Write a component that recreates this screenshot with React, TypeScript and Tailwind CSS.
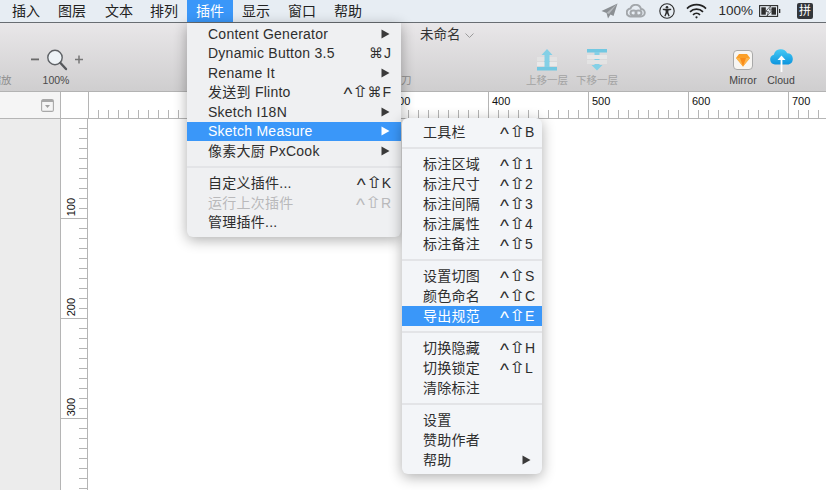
import React from 'react';

const FONT = "font-['Liberation_Sans','Noto_Sans_CJK_SC',sans-serif]";

const menuBar = [
  { label: '插入', ml: 'ml-[12px]' },
  { label: '图层', ml: 'ml-[18px]' },
  { label: '文本', ml: 'ml-[19px]' },
  { label: '排列', ml: 'ml-[17px]' },
];

type Row =
  | { sep: true }
  | { sep?: false; label: string; key?: string; arrow?: boolean; active?: boolean; disabled?: boolean };

const pluginMenu: Row[] = [
  { label: 'Content Generator', arrow: true },
  { label: 'Dynamic Button 3.5', key: '⌘J' },
  { label: 'Rename It', arrow: true },
  { label: '发送到 Flinto', key: '^⇧⌘F' },
  { label: 'Sketch I18N', arrow: true },
  { label: 'Sketch Measure', arrow: true, active: true },
  { label: '像素大厨 PxCook', arrow: true },
  { sep: true },
  { label: '自定义插件...', key: '^⇧K' },
  { label: '运行上次插件', key: '^⇧R', disabled: true },
  { label: '管理插件...' },
];

const measureMenu: Row[] = [
  { label: '工具栏', key: '^⇧B' },
  { sep: true },
  { label: '标注区域', key: '^⇧1' },
  { label: '标注尺寸', key: '^⇧2' },
  { label: '标注间隔', key: '^⇧3' },
  { label: '标注属性', key: '^⇧4' },
  { label: '标注备注', key: '^⇧5' },
  { sep: true },
  { label: '设置切图', key: '^⇧S' },
  { label: '颜色命名', key: '^⇧C' },
  { label: '导出规范', key: '^⇧E', active: true },
  { sep: true },
  { label: '切换隐藏', key: '^⇧H' },
  { label: '切换锁定', key: '^⇧L' },
  { label: '清除标注' },
  { sep: true },
  { label: '设置' },
  { label: '赞助作者' },
  { label: '帮助', arrow: true },
];

function Arrow({ light }: { light?: boolean }) {
  return (
    <svg width="9" height="10" viewBox="0 0 9 10" className="shrink-0">
      <path d="M0.5 0.5 L8.5 5 L0.5 9.5 Z" fill={light ? '#ffffff' : '#3a3a3a'} />
    </svg>
  );
}

// modifier glyphs come out too small at the menu size, so each gets its own size and a fixed box
function Shortcut({ text }: { text: string }) {
  return (
    <span className="flex items-center h-[14px]">
      {text.split('').map((ch, i) => {
        if (ch === '^') {
          return <span key={i} className="flex justify-center w-[11px] text-[19px] leading-[14px] translate-y-[2px]">^</span>;
        }
        if (ch === '⇧') {
          return <span key={i} className="flex justify-center w-[14px] font-['DejaVu_Sans',sans-serif] text-[16px] leading-[14px] scale-x-[1.3]">⇧</span>;
        }
        if (ch === '⌘') {
          return <span key={i} className="flex justify-center w-[14px] font-['DejaVu_Sans',sans-serif] text-[14px] leading-[14px]">⌘</span>;
        }
        return <span key={i} className="ml-[1px]">{ch}</span>;
      })}
    </span>
  );
}

function MenuRows({ rows, rowH, sepY, keyLeft }: { rows: Row[]; rowH: string; sepY: string; keyLeft?: boolean }) {
  return (
    <>
      {rows.map((row, i) => {
        if (row.sep) {
          return <div key={i} className={`h-[2px] bg-[#e3e4e7] ${sepY}`} />;
        }
        const color = row.active ? 'bg-[#3a97f9] text-white' : row.disabled ? 'text-[#b9b9bb]' : 'text-[#2e2e2e]';
        return (
          <div key={i} className={`relative flex items-center pl-[21px] text-[14px] leading-none ${rowH} ${color}`}>
            <span className="tracking-[0.25px] whitespace-nowrap">{row.label}</span>
            {row.key && !keyLeft && <span className="ml-auto pr-[10px]"><Shortcut text={row.key} /></span>}
            {row.key && keyLeft && <span className="absolute left-[97px]"><Shortcut text={row.key} /></span>}
            {row.arrow && (
              <span className="ml-auto pr-[11px] flex">
                <Arrow light={row.active} />
              </span>
            )}
          </div>
        );
      })}
    </>
  );
}

function StatusIcons() {
  return (
    <div className="ml-auto flex items-center h-full">
      <svg width="17" height="16" viewBox="0 0 17 16">
        <path d="M16.5 0.5 L0.5 8 L5.5 10 L7 15.5 L9.5 11.5 L12.5 13 Z" fill="#8b8f93" />
        <path d="M5.5 10 L16.5 0.5 L8 11" fill="#b4b8bc" />
      </svg>
      <svg width="20" height="14" viewBox="0 0 20 14" className="ml-[8px]" fill="none" stroke="#a3a7ab" strokeWidth="2">
        <path d="M5 12.5 a4 4 0 0 1 -0.5 -8 a5.5 5.5 0 0 1 10.5 0.5 a3.7 3.7 0 0 1 0 7.5 Z" />
        <ellipse cx="7.5" cy="9" rx="3" ry="2.4" />
        <ellipse cx="12.5" cy="9" rx="3" ry="2.4" />
      </svg>
      <svg width="16" height="16" viewBox="0 0 16 16" className="ml-[13px]">
        <circle cx="8" cy="8" r="7.2" fill="none" stroke="#2c2c2c" strokeWidth="1.1" />
        <circle cx="8" cy="4.2" r="1.3" fill="#2c2c2c" />
        <path d="M3.8 5.8 L12.2 5.8 L12.2 6.9 L9.4 7.5 L9.4 9.5 L10.7 13 L9.6 13.4 L8 10.2 L6.4 13.4 L5.3 13 L6.6 9.5 L6.6 7.5 L3.8 6.9 Z" fill="#2c2c2c" />
      </svg>
      <svg width="21" height="16" viewBox="0 0 21 16" className="ml-[11px]" fill="none" stroke="#222222" strokeWidth="1.7">
        <path d="M1 5.6 a13.5 13.5 0 0 1 19 0" />
        <path d="M4 8.8 a9.2 9.2 0 0 1 13 0" />
        <path d="M7 11.8 a5 5 0 0 1 7 0" />
        <circle cx="10.5" cy="14.3" r="1.1" fill="#222222" stroke="none" />
      </svg>
      <span className="ml-[11px] text-[13.5px] leading-none text-[#2a2a2a]">100%</span>
      <svg width="22" height="12" viewBox="0 0 22 12" className="ml-[6px]">
        <rect x="0.6" y="0.6" width="18" height="10.8" fill="none" stroke="#2c2c2c" strokeWidth="1.1" />
        <rect x="2.3" y="2.3" width="4.5" height="7.4" fill="#2c2c2c" />
        <rect x="12.5" y="2.3" width="4.5" height="7.4" fill="#2c2c2c" />
        <path d="M11.5 1 L6.5 6.6 L9.5 6.6 L8 11 L13.5 5 L10.5 5 Z" fill="#e9eef4" stroke="#2c2c2c" strokeWidth="0.7" />
        <rect x="20" y="4" width="1.3" height="4" fill="#2c2c2c" />
      </svg>
      <span className="ml-[16px] mr-[13px] w-[16px] h-[16px] rounded-[2px] bg-[#33363a] text-white text-[12px] leading-[16px] text-center">
        拼
      </span>
    </div>
  );
}

function ToolItem({ label, ml, w, color, children }: { label: string; ml: string; w: string; color: string; children?: React.ReactNode }) {
  return (
    <div className={`flex flex-col items-center shrink-0 ${ml} ${w}`}>
      <div className="h-[24px] flex items-center justify-center">{children}</div>
      <span className={`mt-[1px] text-[10.5px] leading-[14px] whitespace-nowrap ${color}`}>{label}</span>
    </div>
  );
}

function Toolbar() {
  return (
    <div className="h-[69px] bg-gradient-to-b from-[#e9e7e9] to-[#cfcecf] border-b border-[#b3b3b3]">
      <div className="h-[25px] pl-[420px] flex items-center text-[13.5px] text-[#333333]">
        未命名
        <svg width="9" height="6" viewBox="0 0 9 6" className="ml-[4px]" fill="none" stroke="#9a9a9a" strokeWidth="1">
          <path d="M0.5 0.5 L4.5 4.5 L8.5 0.5" />
        </svg>
      </div>
      <div className="flex">
        <ToolItem label="缩放" ml="-ml-[12px]" w="w-[26px]" color="text-[#8e8e8e]" />
        <ToolItem label="100%" ml="ml-[14px]" w="w-[56px]" color="text-[#4a4a4a]">
          <svg width="54" height="24" viewBox="0 0 54 24">
            <rect x="2" y="10.5" width="8" height="1.8" fill="#6a6a6a" />
            <circle cx="26" cy="9.5" r="7.2" fill="#eef3f7" stroke="#5f6266" strokeWidth="1.4" />
            <path d="M31.5 15 L37 21" stroke="#55585c" strokeWidth="2.4" strokeLinecap="round" />
            <path d="M46 11.4 h8 M50 7.4 v8" stroke="#777777" strokeWidth="1.5" />
          </svg>
        </ToolItem>
        <ToolItem label="切刀" ml="ml-[304px]" w="w-[26px]" color="text-[#8e8e8e]" />
        <ToolItem label="上移一层" ml="ml-[108px]" w="w-[50px]" color="text-[#a3a3a3]">
          <svg width="20" height="22" viewBox="0 0 20 22">
            <path d="M10 0 L15.5 6 L12.5 6 L12.5 18 L7.5 18 L7.5 6 L4.5 6 Z" fill="#84d0e6" />
            <rect x="0" y="8" width="20" height="4" fill="#e3e3e3" />
            <rect x="0" y="13" width="20" height="4" fill="#e9e9e9" />
            <path d="M7.5 8 h5 v9 h-5 Z" fill="#84d0e6" />
            <rect x="0" y="18" width="20" height="3.5" fill="#72c8e2" />
          </svg>
        </ToolItem>
        <ToolItem label="下移一层" w="w-[50px]" ml="" color="text-[#a3a3a3]">
          <svg width="20" height="22" viewBox="0 0 20 22">
            <rect x="0" y="0" width="20" height="3.5" fill="#72c8e2" />
            <path d="M7.5 3 h5 v13 h3 L10 21.5 L4.5 16 h3 Z" fill="#84d0e6" />
            <rect x="0" y="6" width="20" height="4" fill="#e8e8e8" />
            <rect x="0" y="11" width="20" height="4" fill="#e3e3e3" />
          </svg>
        </ToolItem>
        <ToolItem label="Mirror" ml="ml-[103px]" w="w-[36px]" color="text-[#444444]">
          <svg width="20" height="20" viewBox="0 0 20 20">
            <rect x="0.5" y="0.5" width="19" height="19" rx="3.5" fill="#f7f5f2" stroke="#a9a9a9" />
            <path d="M6 4 H14 L17 8 L10 16.5 L3 8 Z" fill="#fb9f28" />
            <path d="M3 8 H17 L10 16.5 Z" fill="#fdb44b" />
            <path d="M7 8 H13 L10 16.5 Z" fill="#f98c1a" />
          </svg>
        </ToolItem>
        <ToolItem label="Cloud" ml="ml-[2px]" w="w-[36px]" color="text-[#444444]">
          <svg width="25" height="24" viewBox="0 0 25 24">
            <defs>
              <linearGradient id="cloudFill" x1="0" y1="0" x2="0" y2="1">
                <stop offset="0" stopColor="#45c9f5" />
                <stop offset="1" stopColor="#0d95de" />
              </linearGradient>
            </defs>
            <path d="M6 16.5 a5 5 0 0 1 -1.2 -9.8 a7.2 7.2 0 0 1 13.4 -1.4 a5.7 5.7 0 0 1 1.4 11.2 Z" fill="url(#cloudFill)" />
            <path d="M12.5 7.5 L16.5 12 L13.4 12 L13.4 24 L11.6 24 L11.6 12 L8.5 12 Z" fill="#ffffff" />
          </svg>
        </ToolItem>
      </div>
    </div>
  );
}

function HorizontalRuler() {
  // labels 0-200 sit under the open menu in the screenshot
  const cells = ['', ' ', '  ', '300', '400', '500', '600', '700'];
  return (
    <div className="flex flex-1 min-w-0 h-[26px] overflow-hidden">
      {cells.map(n => (
        <div key={n} className="relative shrink-0 w-[100px] border-l border-[#b5b5b5] flex items-end">
          {n.trim() && <span className="absolute left-[3px] top-[2px] text-[11px] leading-[14px] text-[#111111]">{n}</span>}
          {Array.from({ length: 9 }).map((_, i) => (
            <div key={i} className="w-[10px] h-[8px] border-r border-[#b5b5b5]" />
          ))}
        </div>
      ))}
    </div>
  );
}

function VerticalRuler() {
  return (
    <div className="w-[28px] shrink-0 border-l border-r border-[#b5b5b5] bg-white">
      {[100, 200, 300, 0].map(n => (
        <div key={n} className="relative h-[100px] border-b border-[#b5b5b5]">
          {Array.from({ length: 9 }).map((_, i) => (
            <div key={i} className="ml-auto w-[8px] h-[10px] border-b border-[#b5b5b5]" />
          ))}
          {n > 0 && (
            <span className="absolute left-[5px] bottom-[2px] text-[11px] leading-[11px] text-[#111111] [writing-mode:vertical-rl] rotate-180">
              {n}
            </span>
          )}
        </div>
      ))}
    </div>
  );
}

export default function App() {
  return (
    <div className={`relative w-[826px] h-[490px] overflow-hidden bg-white ${FONT}`}>
      {/* Menu bar */}
      <div className="flex items-center h-[23px] bg-[#e7edf3] border-b border-[#686d72] text-[14px] text-[#222222]">
        {menuBar.map(m => (
          <span key={m.label} className={m.ml}>{m.label}</span>
        ))}
        <span className="ml-[9px] h-[22px] w-[46px] bg-[#3a97f9] text-white text-center leading-[22px]">插件</span>
        <span className="ml-[9px]">显示</span>
        <span className="ml-[18px]">窗口</span>
        <span className="ml-[18px]">帮助</span>
        <StatusIcons />
      </div>

      <Toolbar />

      {/* Ruler row */}
      <div className="flex border-b border-[#b5b5b5]">
        <div className="w-[60px] h-[26px] shrink-0 bg-[#f5f5f5] flex items-center justify-end pr-[6px]">
          <svg width="13" height="13" viewBox="0 0 13 13">
            <rect x="0.6" y="0.6" width="11.8" height="11.8" rx="1.5" fill="#f5f5f5" stroke="#a8a8a8" strokeWidth="1.1" />
            <rect x="1" y="1" width="11" height="2" fill="#a8a8a8" />
            <path d="M4 6 H9 L6.5 9 Z" fill="#a0a0a0" />
          </svg>
        </div>
        <div className="w-[28px] h-[26px] shrink-0 border-l border-[#b5b5b5] bg-white" />
        <HorizontalRuler />
      </div>

      {/* Canvas */}
      <div className="flex h-[371px]">
        <div className="w-[60px] shrink-0 bg-[#ececec]" />
        <VerticalRuler />
        <div className="flex-1 bg-white" />
      </div>

      {/* 插件 menu */}
      <div className="absolute left-[187px] top-[23px] w-[214px] h-[214px] pt-[1px] bg-[#eff0f2] rounded-b-[6px] shadow-[0_3px_14px_rgba(0,0,0,0.32)]">
        <MenuRows rows={pluginMenu} rowH="h-[19.5px]" sepY="my-[5.5px]" />
      </div>

      {/* Sketch Measure submenu */}
      <div className="absolute left-[402px] top-[118px] w-[140px] h-[356px] pt-[4px] bg-[#f3f5f8] rounded-[6px] shadow-[0_3px_14px_rgba(0,0,0,0.32)]">
        <MenuRows rows={measureMenu} rowH="h-[20px]" sepY="my-[5px]" keyLeft />
      </div>
    </div>
  );
}
